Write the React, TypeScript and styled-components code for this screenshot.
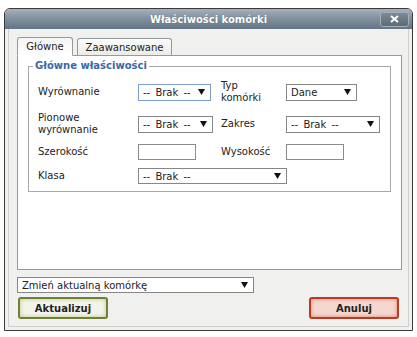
import styled, { createGlobalStyle } from "styled-components";

const GlobalStyle = createGlobalStyle`
  body {
    margin: 0;
    background: #fff;
    font-family: "DejaVu Sans", Verdana, sans-serif;
    font-size: 10px;
    color: #222;
  }
`;

const Page = styled.div`
  padding: 8px 0 0 4px;
`;

const Dialog = styled.div`
  width: 409px;
  height: 323px;
  box-sizing: border-box;
  border: 1px solid #3a3a3a;
  border-radius: 6px 6px 0 0;
  background: #f0f0ee;
  display: flex;
  flex-direction: column;
  overflow: hidden;
`;

const TitleBar = styled.div`
  height: 21px;
  display: grid;
  grid-template-columns: 1fr auto 1fr;
  align-items: center;
  background: linear-gradient(#a6b1bb, #8392a0 45%, #627485);
`;

const Title = styled.div`
  grid-column: 2;
  color: #fff;
  font-weight: bold;
  font-size: 10px;
  text-shadow: 0 0 1px #4a5866;
`;

const CloseButton = styled.div`
  grid-column: 3;
  justify-self: end;
  margin-right: 3px;
  width: 29px;
  height: 15px;
  box-sizing: border-box;
  border: 1px solid #a3aeb7;
  border-radius: 3px;
  background: linear-gradient(#7d8a95, #5d6b77);
  display: flex;
  align-items: center;
  justify-content: center;
`;

const Body = styled.div`
  flex: 1;
  margin: 0 3px 3px;
  border: 1px solid #cfcfcb;
  border-top: none;
  padding: 8px 6px 7px 8px;
  display: flex;
  flex-direction: column;
`;

const Tabs = styled.div`
  display: flex;
  align-items: flex-end;
  gap: 4px;
  height: 18px;
`;

const Tab = styled.div<{ $active?: boolean; $w: number }>`
  width: ${p => p.$w}px;
  height: ${p => (p.$active ? 19 : 17)}px;
  margin-bottom: ${p => (p.$active ? -1 : 0)}px;
  position: relative;
  z-index: ${p => (p.$active ? 1 : 0)};
  box-sizing: border-box;
  border: 1px solid #919b9c;
  border-bottom: ${p => (p.$active ? "1px solid #fff" : "none")};
  border-radius: 3px 3px 0 0;
  background: ${p => (p.$active ? "linear-gradient(#f4f4f4, #fff)" : "linear-gradient(#fbfbfa, #ecebe6)")};
  display: flex;
  align-items: center;
  justify-content: center;
  padding-bottom: ${p => (p.$active ? 1 : 0)}px;
`;

const Panel = styled.div`
  height: 215px;
  box-sizing: border-box;
  border: 1px solid #919b9c;
  background: #fff;
  padding: 4px 10px 0;
`;

const Fieldset = styled.fieldset`
  margin: 0;
  border: 1px solid #a8a8a8;
  padding: 4px 9px 3px;
`;

const Legend = styled.legend`
  margin-left: -5px;
  padding: 0 2px;
  font-weight: bold;
  color: #3a68a6;
  line-height: 12px;
`;

const FormGrid = styled.div`
  display: grid;
  grid-template-columns: 100px 83px 65px 1fr;
  grid-template-rows: 32px 32px 24px 24px;
  align-items: center;
`;

const Label = styled.div`
  line-height: 12px;
  color: #222;
`;

const SelectBox = styled.div<{ $w: number; $focus?: boolean; $span?: number; $h?: number }>`
  grid-column: ${p => (p.$span ? `span ${p.$span}` : "auto")};
  width: ${p => p.$w}px;
  height: ${p => p.$h ?? 17}px;
  box-sizing: border-box;
  border: 1px solid ${p => (p.$focus ? "#7c9ed6" : "#868686")};
  background: #fff;
  padding: 0 5px 0 4px;
  display: flex;
  align-items: center;
  justify-content: space-between;
`;

const SelectText = styled.span<{ $wide?: boolean }>`
  word-spacing: ${p => (p.$wide ? 2 : 0)}px;
`;

const TextInput = styled.div`
  width: 58px;
  height: 16px;
  box-sizing: border-box;
  border: 1px solid #8a8a8a;
  background: #fff;
`;

const Footer = styled.div`
  margin-top: 7px;
  display: flex;
  flex-direction: column;
  gap: 4px;
`;

const Buttons = styled.div`
  display: flex;
  justify-content: space-between;
  padding: 0 3px 0 1px;
`;

const Button = styled.div<{ $tone: "ok" | "cancel" }>`
  width: 90px;
  height: 22px;
  box-sizing: border-box;
  border: 2px solid ${p => (p.$tone === "ok" ? "#6e8135" : "#bb3b22")};
  border-radius: 3px;
  background: ${p => (p.$tone === "ok" ? "#f3f3ea" : "#f4d8d0")};
  box-shadow: inset 0 0 4px ${p => (p.$tone === "ok" ? "#b9c68a" : "#e1886f")};
  font-weight: bold;
  color: #222;
  display: flex;
  align-items: center;
  justify-content: center;
`;

function Arrow() {
  return (
    <svg width="7" height="6" viewBox="0 0 7 6">
      <polygon points="0,0 7,0 3.5,6" fill="#111" />
    </svg>
  );
}

const NONE = "-- Brak --";

function Select({ text, w, focus, span, h }: { text: string; w: number; focus?: boolean; span?: number; h?: number }) {
  return (
    <SelectBox $w={w} $focus={focus} $span={span} $h={h}>
      <SelectText $wide={text === NONE}>{text}</SelectText>
      <Arrow />
    </SelectBox>
  );
}

export default function App() {
  return (
    <Page>
      <GlobalStyle />
      <Dialog>
        <TitleBar>
          <Title>Właściwości komórki</Title>
          <CloseButton>
            <svg width="9" height="8" viewBox="0 0 9 8">
              <path d="M1 1 L8 7 M8 1 L1 7" stroke="#fff" strokeWidth="2" />
            </svg>
          </CloseButton>
        </TitleBar>
        <Body>
          <Tabs>
            <Tab $active $w={56}>Główne</Tab>
            <Tab $w={95}>Zaawansowane</Tab>
          </Tabs>
          <Panel>
            <Fieldset>
              <Legend>Główne właściwości</Legend>
              <FormGrid>
                <Label>Wyrównanie</Label>
                <Select text={NONE} w={73} focus />
                <Label>Typ<br />komórki</Label>
                <Select text="Dane" w={71} />

                <Label>Pionowe<br />wyrównanie</Label>
                <Select text={NONE} w={75} />
                <Label>Zakres</Label>
                <Select text={NONE} w={94} />

                <Label>Szerokość</Label>
                <TextInput />
                <Label>Wysokość</Label>
                <TextInput />

                <Label>Klasa</Label>
                <Select text={NONE} w={149} span={3} h={16} />
              </FormGrid>
            </Fieldset>
          </Panel>
          <Footer>
            <Select text="Zmień aktualną komórkę" w={237} h={16} />
            <Buttons>
              <Button $tone="ok">Aktualizuj</Button>
              <Button $tone="cancel">Anuluj</Button>
            </Buttons>
          </Footer>
        </Body>
      </Dialog>
    </Page>
  );
}
